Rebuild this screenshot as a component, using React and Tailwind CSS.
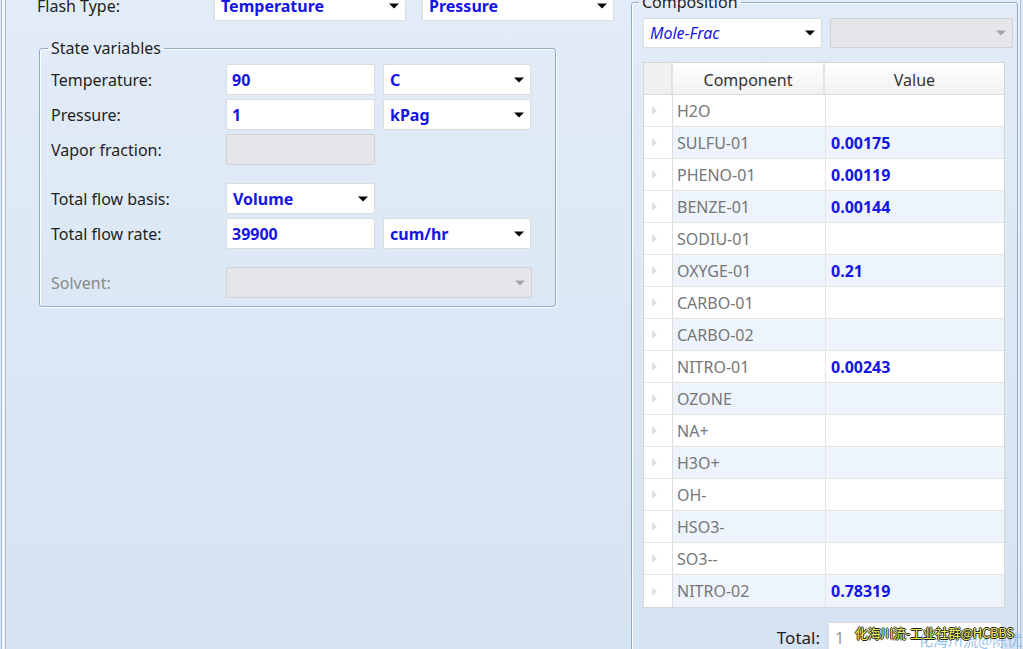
import React from "react";

const rows = [
  ["H2O", ""],
  ["SULFU-01", "0.00175"],
  ["PHENO-01", "0.00119"],
  ["BENZE-01", "0.00144"],
  ["SODIU-01", ""],
  ["OXYGE-01", "0.21"],
  ["CARBO-01", ""],
  ["CARBO-02", ""],
  ["NITRO-01", "0.00243"],
  ["OZONE", ""],
  ["NA+", ""],
  ["H3O+", ""],
  ["OH-", ""],
  ["HSO3-", ""],
  ["SO3--", ""],
  ["NITRO-02", "0.78319"],
];

const Caret = ({ disabled }) => (
  <svg width="10" height="6" viewBox="0 0 10 6" className="shrink-0">
    <path d="M0 0.5h10L5 5.5z" fill={disabled ? "#a3a3a8" : "#000"} />
  </svg>
);

const Select = ({ value, width, italic, disabled, height = "h-[31px]" }) => (
  <div
    className={`${width} ${height} shrink-0 flex items-center justify-between pl-[6px] pr-[6px] rounded-[2px] border ${
      disabled ? "bg-[#e6e6ea] border-[#d2d2d6]" : "bg-white border-[#dcdcdc]"
    }`}
  >
    <span
      className={`text-[#1515e6] ${italic ? "italic font-normal" : "font-bold"}`}
    >
      {value}
    </span>
    <Caret disabled={disabled} />
  </div>
);

const Input = ({ value, disabled }) => (
  <div
    className={`w-[149px] h-[31px] shrink-0 flex items-center pl-[5px] rounded-[2px] border ${
      disabled ? "bg-[#e6e6ea] border-[#d2d2d6]" : "bg-white border-[#dcdcdc]"
    }`}
  >
    <span className="font-bold text-[#1515e6]">{value}</span>
  </div>
);

const Row = ({ label, children, muted }) => (
  <div className="flex items-center gap-[8px]">
    <div className={`w-[167px] shrink-0 ${muted ? "text-[#8a8a8a]" : ""}`}>{label}</div>
    {children}
  </div>
);

const App = () => {
  return (
    <div className="relative w-[1023px] h-[649px] overflow-hidden flex bg-gradient-to-b from-[#e2ecf8] to-[#d6e3f2] font-['Noto_Sans',sans-serif] text-[16px] text-[#1f1f1f] leading-[20px]">
      <div className="w-[7px] shrink-0 flex">
        <div className="w-px ml-px bg-[#a9bdd6]" />
        <div className="w-[3px] bg-[#f2f6fb]" />
        <div className="w-px bg-[#a9bdd6]" />
      </div>

      <div className="w-[624px] shrink-0 flex flex-col">
        <div className="flex items-center -mt-[9px] pl-[30px]">
          <div className="w-[177px] shrink-0">Flash Type:</div>
          <div className="flex gap-[16px]">
            <Select value="Temperature" width="w-[192px]" height="h-[30px]" />
            <Select value="Pressure" width="w-[192px]" height="h-[30px]" />
          </div>
        </div>

        <fieldset className="mt-[17px] ml-[32px] w-[517px] border border-[#91a9c8] rounded-[3px] shadow-[inset_1px_1px_0_#ffffff,1px_1px_0_#ffffff] pl-[11px] pt-[6px] pb-[8px]">
          <legend className="-ml-[3px] px-[3px] leading-[20px]">State variables</legend>
          <div className="flex flex-col gap-[4px]">
            <Row label="Temperature:">
              <Input value="90" />
              <Select value="C" width="w-[148px]" />
            </Row>
            <Row label="Pressure:">
              <Input value="1" />
              <Select value="kPag" width="w-[148px]" />
            </Row>
            <Row label="Vapor fraction:">
              <Input value="" disabled />
            </Row>
          </div>
          <div className="flex flex-col gap-[4px] mt-[18px]">
            <Row label="Total flow basis:">
              <Select value="Volume" width="w-[149px]" />
            </Row>
            <Row label="Total flow rate:">
              <Input value="39900" />
              <Select value="cum/hr" width="w-[148px]" />
            </Row>
          </div>
          <div className="mt-[18px]">
            <Row label="Solvent:" muted>
              <Select value="" width="w-[306px]" disabled />
            </Row>
          </div>
        </fieldset>
      </div>

      <fieldset className="-mt-[8px] w-[387px] h-[680px] shrink-0 border border-[#91a9c8] rounded-[3px] shadow-[inset_1px_1px_0_#ffffff] pl-[11px] pt-[6px]">
        <legend className="-ml-[4px] px-[3px] leading-[20px]">Composition</legend>
        <div className="flex gap-[8px]">
          <Select value="Mole-Frac" width="w-[179px]" height="h-[30px]" italic />
          <Select value="" width="w-[183px]" height="h-[30px]" disabled />
        </div>

        <div className="mt-[14px] w-[362px] border border-[#d6d6d6] bg-white">
          <div className="flex h-[32px] bg-gradient-to-b from-[#ffffff] to-[#f1f1f1] border-b border-[#dcdcdc] text-[#333333]">
            <div className="w-[29px] shrink-0 bg-[#f0f0f0] border-r-2 border-[#e2e2e2]" />
            <div className="w-[152px] shrink-0 flex items-center justify-center pt-[2px] border-r-2 border-[#e2e2e2]">
              Component
            </div>
            <div className="flex-1 flex items-center justify-center pt-[2px]">Value</div>
          </div>
          {rows.map(([name, val], i) => (
            <div
              key={name}
              className={`flex h-[32px] border-b border-[#e4e4e4] last:border-b-0 ${
                i % 2 === 1 ? "bg-[#eef4fb]" : "bg-white"
              }`}
            >
              <div className="w-[29px] shrink-0 bg-white border-r border-[#dcdcdc] flex items-center pl-[8px]">
                <svg width="5" height="9" viewBox="0 0 5 9">
                  <path d="M0 0l5 4.5L0 9z" fill="#e0e0e0" />
                </svg>
              </div>
              <div className="w-[153px] shrink-0 flex items-center pl-[4px] border-r border-[#e4e4e4] text-[#767676]">
                {name}
              </div>
              <div className="flex-1 flex items-center pl-[5px] font-bold text-[#1515e6]">
                {val}
              </div>
            </div>
          ))}
        </div>

        <div className="mt-[14px] flex items-center">
          <div className="w-[185px] shrink-0 text-right pr-[8px] text-[17px]">Total:</div>
          <div className="w-[174px] h-[31px] bg-white border border-[#dcdcdc] rounded-[2px] flex items-center pl-[6px] text-[#9a9a9a]">
            1
          </div>
        </div>
      </fieldset>

      <div className="flex-1 flex">
        <div className="w-[2px] bg-[#eaf1f9]" />
        <div className="w-px bg-[#a9bdd6]" />
      </div>

      <div className="absolute left-[918px] top-[631px] whitespace-nowrap text-[15px] leading-[18px] text-[#7db6ec] font-['Noto_Sans_CJK_SC',sans-serif] opacity-80">
        化海川流@陈优秀
      </div>
      <div className="absolute left-[855px] top-[624px] whitespace-nowrap text-[13px] tracking-[-0.3px] leading-[18px] text-[#eef05a] font-['Noto_Sans_CJK_SC',sans-serif] [text-shadow:-1px_0_#222,1px_0_#222,0_1px_#222,0_-1px_#222]">
        化海川流-工业社群@HCBBS
      </div>
    </div>
  );
};

export default App;
